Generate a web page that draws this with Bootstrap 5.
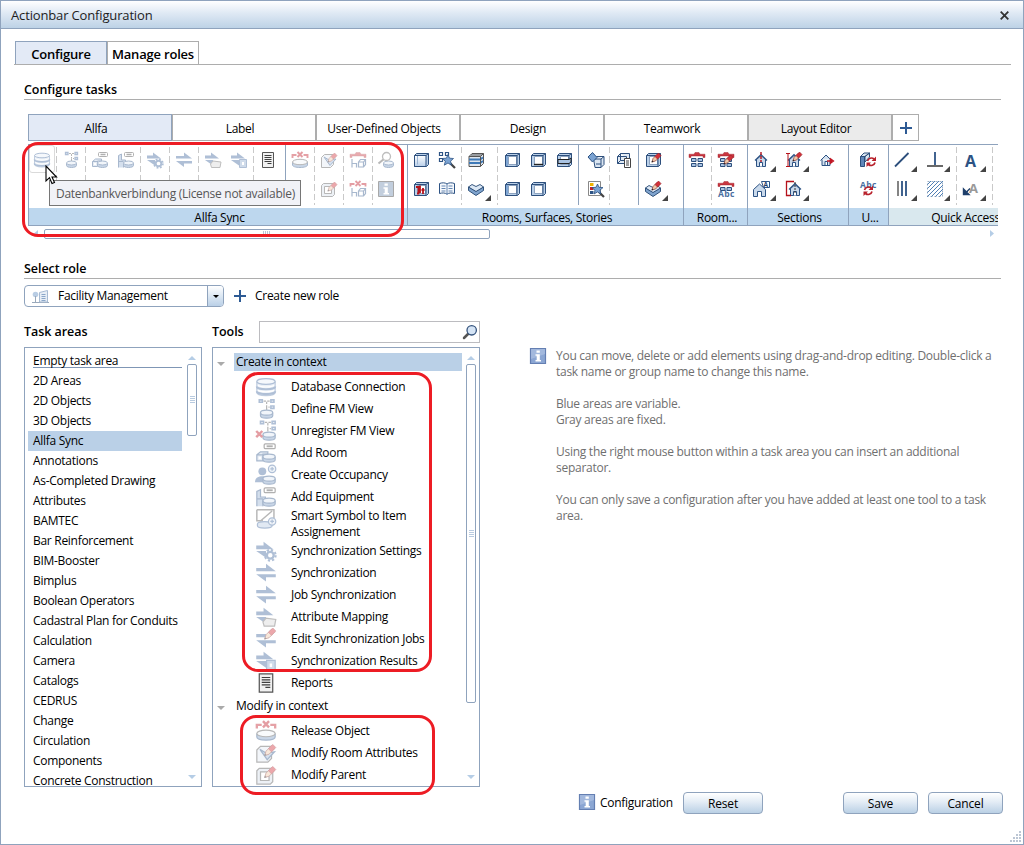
<!DOCTYPE html>
<html lang="en">

<head>
    <meta charset="UTF-8">
    <meta name="viewport" content="width=device-width, initial-scale=1">
    <title>Actionbar Configuration</title>
    <link href="https://cdn.jsdelivr.net/npm/bootstrap@5.3.3/dist/css/bootstrap.min.css" rel="stylesheet">
    <style>
        :root {
            --edge: #8fa3bd;
            --rule: #adadad;
            --pick: #bad0e7;
            --group: #bdd7ee;
        }

        body {
            font-family: "Open Sans", "Noto Sans", sans-serif;
            font-size: 12px;
            line-height: 16px;
            letter-spacing: -0.29px;
            color: #000;
        }

        svg {
            display: block;
            flex: none;
        }

        .dialog-box {
            width: 1024px;
            height: 845px;
            border: 1px solid var(--edge);
            overflow: hidden;
        }

        .title-bar {
            height: 28px;
            padding: 1px 14px 0 10px;
            font-size: 13px;
            letter-spacing: -0.15px;
            color: #1d1d1d;
            background: linear-gradient(#fff, #dfe9f4 45%, #bdd2e6);
            border-bottom: 1px solid var(--edge);
        }

        .top-tabs {
            margin: 12px 12px 0 13px;
            padding-left: 1px;
            height: 24px;
            border-bottom: 1px solid var(--rule);
        }

        .top-tab {
            width: 92px;
            height: 23px;
            line-height: 24px;
            text-align: center;
            font-size: 13px;
            font-weight: 600;
            letter-spacing: -0.2px;
            border: 1px solid var(--rule);
            border-bottom: 0;
            white-space: nowrap;
        }

        .top-tab.on,
        .area-tab.on {
            background: #e3eaf6;
            border-color: var(--edge);
        }

        .section-head {
            margin: 0 22px 0 23px;
            padding-bottom: 1px;
            border-bottom: 1px solid var(--rule);
        }

        .head-text {
            font-size: 12.5px;
            font-weight: 600;
            letter-spacing: -0.05px;
        }

        .head-tasks {
            padding-top: 17px;
        }

        .head-role {
            margin-top: 22px;
        }

        .area-tabs {
            margin: 14px 0 0 27px;
        }

        .area-tab {
            width: 144px;
            height: 27px;
            line-height: 27px;
            padding-right: 8px;
            text-align: center;
            border: 1px solid var(--rule);
        }

        .area-tab.fixed {
            background: #ebebeb;
        }

        .area-tab.plus {
            width: 27px;
            padding: 0;
        }

        /* ribbon */
        .ribbon {
            margin: 3px 25px 0 27px;
            height: 82px;
            border-top: 1px solid var(--edge);
            border-bottom: 1px solid var(--edge);
            overflow: hidden;
        }

        .grp {
            flex: none;
            border-left: 1px solid var(--edge);
        }

        .grp-tools {
            height: 63px;
        }

        .grp-name {
            height: 17px;
            line-height: 19px;
            padding-left: 3px;
            text-align: center;
            background: var(--group);
        }

        .sub {
            padding: 0 1px;
            height: 60px;
            display: grid;
            grid-auto-rows: 29px;
            border-right: 1px solid transparent;
        }

        .sub.dash {
            border-image: repeating-linear-gradient(transparent 0 3px, #c9c9c9 3px 9px) 1;
            border-width: 0 1px 0 0;
            border-style: solid;
        }

        .sub.line {
            border-right-color: var(--edge);
        }

        .c1 { grid-template-columns: 26px; }
        .c2 { grid-template-columns: 26px 26px; }
        .c3 { grid-template-columns: 26px 26px 26px; }
        .t1 { grid-template-columns: 33px; }
        .t2 { grid-template-columns: 33px 33px; }
        .t3 { grid-template-columns: 33px 33px 26px; }

        .tool {
            padding: 6px 4px;
        }

        .tool svg {
            width: 18px;
            height: 18px;
        }

        .off svg {
            opacity: .42;
        }

        .more {
            display: flex;
        }

        .more::after {
            content: "";
            margin-top: 15px;
            border: 3px solid #444;
            border-top-color: transparent;
            border-left-color: transparent;
            width: 0;
            height: 0;
        }

        .hot {
            width: 26px;
            height: 28px;
            padding: 5px 3px;
            border: 1px solid #dadada;
            border-radius: 3px;
        }

        .w-g1 { width: 379px; }
        .w-g2 { width: 276px; }
        .w-g3 { width: 64px; }
        .w-g4 { width: 101px; }
        .w-g5 { width: 40px; }
        .w-g6 { width: 151px; }
        .w-g6 .grp-name { background: #d9e8ee; }

        .h-scroll {
            margin: 2px 29px 0 33px;
            height: 11px;
        }

        .h-thumb {
            width: 446px;
            height: 10px;
            margin-left: 6px;
            border: 1px solid var(--edge);
            border-radius: 2px;
        }

        .grip {
            width: 8px;
            height: 5px;
            background: repeating-linear-gradient(90deg, #b9c6d6 0 1px, transparent 1px 2px);
        }

        .grip-v {
            width: 5px;
            height: 8px;
            background: repeating-linear-gradient(#b9cbe0 0 1px, transparent 1px 2px);
        }

        /* role */
        .role-row {
            margin: 6px 0 0 23px;
        }

        .role-plus {
            margin: 0 9px 0 10px;
        }

        .combo {
            width: 200px;
            height: 22px;
            border: 1px solid var(--edge);
            border-radius: 4px;
            overflow: hidden;
        }

        .combo-icon {
            margin: 0 9px 0 7px;
        }

        .combo-drop {
            width: 16px;
            border-left: 1px solid var(--edge);
            background: linear-gradient(#fff, #bad0e7);
        }

        .pane-heads {
            margin: 14px 0 0 23px;
        }

        .head-left { width: 188px; }
        .head-right { width: 47px; }

        .search-box {
            width: 221px;
            height: 22px;
            border: 1px solid #bcbcc0;
            padding-right: 1px;
        }

        /* lists */
        .panes {
            margin: 4px 0 0 23px;
        }

        .pane {
            height: 440px;
            border: 1px solid var(--edge);
            overflow: hidden;
        }

        .pane-left {
            width: 178px;
            padding-left: 3px;
        }

        .pane-right {
            width: 268px;
            margin-left: 10px;
        }

        .area-list {
            width: 154px;
            padding-top: 4px;
        }

        .area-list li {
            height: 20px;
            line-height: 20px;
            padding-left: 5px;
        }

        .area-list li.first {
            height: 16px;
            line-height: 17px;
            margin: 0 0 3px 5px;
            padding: 0;
            border-bottom: 1px solid #7f96b5;
        }

        .area-list li.sel,
        .branch.sel .branch-name {
            background: var(--pick);
        }

        .v-scroll {
            width: 10px;
        }

        .pane-left .v-scroll { margin-left: 5px; }
        .pane-right .v-scroll { margin-left: 4px; }

        .v-thumb {
            width: 10px;
            border: 1px solid var(--edge);
            border-radius: 2px;
        }

        .h-left { height: 72px; }
        .h-right { height: 339px; }
        .arrow-up { margin: 8px 0 4px; }
        .arrow-down { margin: auto 0 7px; }

        .tree {
            width: 249px;
            padding-top: 5px;
        }

        .branch {
            height: 18px;
            line-height: 18px;
            margin-bottom: 5px;
        }

        .branch.second { margin-top: 3px; }
        .twist { margin: 3px 9px 0 4px; }

        .branch-name {
            width: 228px;
            padding-left: 2px;
        }

        .leaf {
            min-height: 22px;
            padding-left: 42px;
        }

        .leaf svg {
            width: 22px;
            height: 22px;
            margin-right: 14px;
        }

        .hint-icon { margin: 0 9px 0 49px; }

        .hint {
            width: 446px;
            margin-top: 1px;
            color: #6f6f6f;
            letter-spacing: -0.27px;
            white-space: nowrap;
        }

        .foot { margin: 5px 20px 0 577px; }
        .foot svg { margin-bottom: 2px; }

        .foot-name {
            width: 87px;
            padding-left: 4px;
        }

        .push {
            height: 22px;
            padding: 0;
            line-height: 21px;
            font-size: 12px;
            color: #000;
            letter-spacing: -0.15px;
            border: 1px solid var(--edge);
            border-radius: 4px;
            background: linear-gradient(#fff, #e3ecf5 45%, #bad0e5);
        }

        .push-reset { width: 80px; }
        .push-end { width: 75px; }
        .push-end + .push-end { margin-left: 10px; }

        /* overlays */
        .ring {
            position: absolute;
            border: 3px solid #ed1c24;
            border-radius: 16px;
        }

        .ring-a { left: 22px; top: 142px; width: 382px; height: 95px; }
        .ring-b { left: 242px; top: 372px; width: 190px; height: 300px; }
        .ring-c { left: 240px; top: 715px; width: 195px; height: 80px; }

        .tip {
            position: absolute;
            left: 49px;
            top: 180px;
            width: 252px;
            height: 26px;
            line-height: 26px;
            padding-left: 6px;
            white-space: nowrap;
            color: #575757;
            background: #f1f2f7;
            border: 1px solid #767676;
        }

        .pointer {
            position: absolute;
            left: 45px;
            top: 165px;
        }

        .size-grip {
            position: absolute;
            left: 1010px;
            top: 831px;
        }
    </style>
</head>

<body>
    <!-- icon sheet, every symbol on an 18x18 field -->
    <svg width="0" height="0" class="position-absolute">
        <defs>
            <linearGradient id="gBlue" x2="0" y2="1">
                <stop offset="0" stop-color="#fff" />
                <stop offset="1" stop-color="#b9cfe9" />
            </linearGradient>
            <g id="p-disk" stroke="#33598c">
                <path d="M6.500 12v2.500c0 1.200 2.300 2 5 2s5-.8 5-2V12" fill="#7fa0c8" />
                <ellipse cx="11.500" cy="12" rx="5" ry="2" fill="#dfe9f5" />
            </g>
            <g id="p-cube">
                <path d="M2.500 4.500l2-2h12v11l-2 2h-12z" fill="#b9cfe8" stroke="#2d4f7c" />
                <path d="M5.500 5.500h8v8h-8z" fill="#fff" stroke="#8da3bf" />
                <path d="M2.500 4.500h11.500v11M14 4.500l2.500-2" fill="none" stroke="#2d4f7c" />
            </g>
            <g id="p-pencil">
                <path d="M8 11l1-3.500L13.500 3l2.500 2.500L11.500 10z" fill="#f0c9a8" stroke="#8c3a33" stroke-width=".7" />
                <path d="M11 5.500L14.500 2 17 4.500 13.500 8z" fill="#d2303a" stroke="#9c1c25" stroke-width=".6" />
                <path d="M7.500 11.500l.6-2 1.400 1.300z" fill="#222" />
            </g>
            <g id="p-tag" fill="none" stroke="#444">
                <rect x="7.500" y="2.500" width="9" height="4" rx="1" />
                <path d="M9.500 4.500h5" stroke-width="1.500" />
            </g>
            <path id="p-roof" d="M1 3.200h5L7 1.500h4l1 1.700h5V6.500h-2V5H3v1.500H1z" fill="#c93640" stroke="#9a1d27" stroke-width=".4" />
            <g id="p-house">
                <path d="M4.500 8.500L9 4.500l4.500 4v7h-9z" fill="#c9d9eb" stroke="#2d5384" />
                <path d="M3 9.500L9 3.500l6 6" fill="none" stroke="#2d5384" stroke-width="1.200" />
                <path d="M7.500 15.500v-4h3v4" fill="#fff" stroke="#2d5384" />
            </g>
            <g id="p-turn" fill="none" stroke="#b8202b" stroke-width="1.700">
                <path d="M8.500 11a4 4 0 0 1 6.500-2M16 12.500a4 4 0 0 1-6.500 2" />
                <path d="M17 6.500v4.500h-4.500zM7.500 17v-4.500H12z" fill="#b8202b" stroke="none" />
            </g>
            <g id="p-cushion" stroke="#23456f" stroke-width=".9">
                <path d="M1.500 8v3.500l7.500 5 7.500-5V8L9 12z" fill="#7fa3cd" />
                <path d="M1.500 8L5 5.500l4 2 4-2L16.500 8 9 12.500z" fill="#dce8f5" />
            </g>
            <path id="p-flow" d="M1 4.500h6V1.500l8 6H1zM1 9h8v5.500z" fill="#42699f" />
            <path id="p-furniture" d="M3 8v8.500M3 12.500h4.500v4M9.500 11l2-2.500h5v5l-2 2.500h-5zM9.500 11h5v5M14.500 11l2-2.500" fill="none" stroke="#33598c" stroke-width="1.200" />
        </defs>
        <symbol id="i-db" viewBox="0 0 18 18">
            <path d="M1.500 4.500v9c0 1.400 3.300 2.500 7.500 2.500s7.500-1.100 7.500-2.500v-9" fill="#d3dfee" stroke="#6b8ab5" />
            <ellipse cx="9" cy="4.500" rx="7.500" ry="2.300" fill="#e9eff8" stroke="#42699f" />
            <path d="M1.500 8.500c0 1.400 3.300 2.300 7.500 2.300s7.500-.9 7.500-2.300M1.500 12.500c0 1.400 3.300 2.300 7.500 2.300s7.500-.9 7.500-2.300" fill="none" stroke="#42699f" stroke-width="1.700" />
            <path d="M2.500 7.500c1 1 3.500 1.500 6.500 1.500s5.500-.5 6.500-1.500M2.500 11.500c1 1 3.500 1.500 6.500 1.500s5.500-.5 6.500-1.500" fill="none" stroke="#fff" />
        </symbol>
        <symbol id="i-view" viewBox="0 0 18 18">
            <path d="M3.500 1.500h2.500v2H3.500zM13 1.500h2.500v2H13zM13 6.500h2.500v2H13z" fill="#fff" stroke="#42699f" stroke-width="1.300" />
            <path d="M7 2.500h5M9.500 3v4.500H12M9.500 8v2" stroke="#555" fill="none" stroke-dasharray="2 1" />
            <use href="#p-disk" x="-2" />
        </symbol>
        <symbol id="i-unview" viewBox="0 0 18 18">
            <path d="M4.500 1h2.500v2H4.500zM14 1h2.500v2H14zM14 6h2.500v2H14z" fill="#fff" stroke="#42699f" stroke-width="1.300" />
            <path d="M8 2h5M10.500 2.500V7H13M10.500 7.500v2" stroke="#555" fill="none" stroke-dasharray="2 1" />
            <use href="#p-disk" />
            <path d="M1 9l5 5m0-5l-5 5" stroke="#c01825" stroke-width="2" />
        </symbol>
        <symbol id="i-room" viewBox="0 0 18 18">
            <use href="#p-tag" y="-1" />
            <path d="M1.500 15.500v-5l3-2.500h6v2h-4v5.500zM1.500 10.500h5" fill="#c5d4e7" stroke="#33598c" />
            <path d="M3 12h2v2H3z" fill="#fff" />
            <use href="#p-disk" />
        </symbol>
        <symbol id="i-person" viewBox="0 0 18 18">
            <circle cx="6" cy="6" r="3.200" fill="#42699f" />
            <path d="M0 15c0-4 3-5 6-5s5 1 5 5z" fill="#42699f" />
            <circle cx="14" cy="4" r="3" fill="#dce6f2" stroke="#42699f" />
            <path d="M14 2.500v3M12.500 4h3" stroke="#42699f" />
            <use href="#p-disk" />
        </symbol>
        <symbol id="i-equip" viewBox="0 0 18 18">
            <use href="#p-tag" y="-1" />
            <path d="M1.500 16.500V4.500L4.500 3v6h4v2.500h-2v5M1.500 10.500h5" fill="#9bb5d6" stroke="#33598c" />
            <use href="#p-disk" />
        </symbol>
        <symbol id="i-smart" viewBox="0 0 18 18">
            <path d="M1.500 1.500h14v7M1.500 1.500v9h5M4 11L14 2.500" fill="none" stroke="#555" stroke-width="1.200" />
            <path d="M2 13c0-2.500 12-2.500 12 0v1.500c0 2.500-12 2.500-12 0z" fill="#b9cce4" stroke="#42699f" />
            <circle cx="14" cy="11" r="3" fill="#dce6f2" stroke="#42699f" />
            <path d="M14 9.500v3M12.500 11h3" stroke="#42699f" />
        </symbol>
        <symbol id="i-sync" viewBox="0 0 18 18">
            <path d="M1 5h8V1.500l8 6H1zM1 10h16v2.500H9V16z" fill="#42699f" />
        </symbol>
        <symbol id="i-syncset" viewBox="0 0 18 18">
            <use href="#p-flow" />
            <circle cx="12.500" cy="12.500" r="4.400" fill="none" stroke="#42699f" stroke-width="1.700" stroke-dasharray="1.800 1.656" />
            <circle cx="12.500" cy="12.500" r="2.800" fill="#fff" stroke="#42699f" stroke-width="1.900" />
        </symbol>
        <symbol id="i-map" viewBox="0 0 18 18">
            <use href="#p-flow" />
            <path d="M6.500 13l2.500-3 8 1-1 5.500H7.500z" fill="#d7d7d7" stroke="#666" />
        </symbol>
        <symbol id="i-syncedit" viewBox="0 0 18 18">
            <path d="M1 5h8v2.500H1zM1 10h16v2.500H9V16z" fill="#42699f" />
            <use href="#p-pencil" y="-2" />
        </symbol>
        <symbol id="i-result" viewBox="0 0 18 18">
            <use href="#p-flow" />
            <path d="M9.500 8.500h7v8h-7z" fill="#8fabcf" stroke="#42699f" />
            <path d="M12 11h2v3h-2z" fill="#fff" />
        </symbol>
        <symbol id="i-report" viewBox="0 0 18 18">
            <path d="M3.500 1.500h11v15h-11z" fill="#f1f1f1" stroke="#555" />
            <path d="M5.500 4.500h7M5.500 6.500h7M5.500 8.500h7M5.500 10.500h7M8.500 12.500h4" stroke="#3f3f3f" />
        </symbol>
        <symbol id="i-release" viewBox="0 0 18 18">
            <path d="M1.500 7V4h4M16.500 7V4h-4" fill="none" stroke="#c3222d" stroke-width="1.900" />
            <path d="M6.500 1l5 5m0-5l-5 5" stroke="#c01825" stroke-width="2" />
            <path d="M1.500 11v3c0 1.500 3.300 2.500 7.500 2.500s7.500-1 7.500-2.500v-3" fill="#7fa0c8" stroke="#33598c" />
            <ellipse cx="9" cy="11" rx="7.500" ry="2.700" fill="#f0f4fa" stroke="#555" />
        </symbol>
        <symbol id="i-modroom" viewBox="0 0 18 18">
            <path d="M1.500 6.500l3-3h9v10l-3 3h-9z" fill="#e4ebf4" stroke="#555" />
            <path d="M4 6l5 3 7-1-6 6.500z" fill="#9fbadb" stroke="#33598c" />
            <use href="#p-pencil" />
        </symbol>
        <symbol id="i-modparent" viewBox="0 0 18 18">
            <path d="M1.500 5.500l2-2h11v11l-2 2h-11z" fill="#d5dfeb" stroke="#555" />
            <path d="M4.500 6.500h7v7h-7z" fill="#fff" stroke="#555" />
            <use href="#p-pencil" />
        </symbol>
        <symbol id="i-furn" viewBox="0 0 18 18">
            <use href="#p-roof" />
            <use href="#p-furniture" />
        </symbol>
        <symbol id="i-furnx" viewBox="0 0 18 18">
            <path d="M1.500 6.500V4h4M16.500 6.500V4h-4M6.500 1l5 5m0-5l-5 5" fill="none" stroke="#c01825" stroke-width="1.800" />
            <use href="#p-furniture" />
        </symbol>
        <symbol id="i-find" viewBox="0 0 18 18">
            <path d="M7 8L1.500 12.500" stroke="#555" stroke-width="2" />
            <use href="#p-disk" />
            <circle cx="9.500" cy="5.500" r="4" fill="#fff" stroke="#666" stroke-width="1.300" />
        </symbol>
        <symbol id="i-info" viewBox="0 0 18 18">
            <path d="M1.500 1.500h15v15h-15z" fill="#8ba6d3" stroke="#647fb2" stroke-width="1.200" />
            <path d="M2 2h14v5L2 12z" fill="#b2c5e4" opacity=".6" />
            <path d="M7.500 3.500h3.300v2.300H7.500zM6.500 7.300h4.300v5.700H12v1.500H6.500V13h1.200V8.800H6.500z" fill="#fff" />
        </symbol>
        <symbol id="i-infooff" viewBox="0 0 18 18">
            <path d="M1.500 1.500h15v15h-15z" fill="#6f8cb0" stroke="#333" />
            <path d="M7.500 3.500h3.300v2.300H7.500zM6.500 7.300h4.300v5.700H12v1.500H6.500V13h1.200V8.800H6.500z" fill="#fff" />
        </symbol>
        <symbol id="i-cube" viewBox="0 0 18 18">
            <path d="M2.500 4.500l2-2h12v11l-2 2h-12z" fill="#b9cfe8" stroke="#2d4f7c" />
            <path d="M2.500 4.500H14v11H2.500z" fill="url(#gBlue)" stroke="#2d4f7c" />
            <path d="M14 4.500l2.500-2" stroke="#2d4f7c" />
            <path d="M5.500 5v8.500" stroke="#9bb4d3" />
        </symbol>
        <symbol id="i-open" viewBox="0 0 18 18">
            <use href="#p-cube" />
            <path d="M3 5h2v10H3z" fill="#7fa6d4" />
        </symbol>
        <symbol id="i-open2" viewBox="0 0 18 18">
            <use href="#p-cube" />
            <path d="M5 13.500h9" stroke="#222" stroke-width="1.400" />
        </symbol>
        <symbol id="i-wand" viewBox="0 0 18 18">
            <path d="M1.500 1.500h3v3h-3zM7.500 1.500h3v3h-3zM1.500 7.500h3v3h-3z" fill="#fff" stroke="#2d5384" stroke-width="1.200" />
            <path d="M12 12l5 5" stroke="#444" stroke-width="2.200" />
            <path d="M10 3.500l1.500 3.700 4 .3-3 2.700 1 4-3.500-2.200-3.700 2.200 1-4-3.100-2.700 4.200-.3z" fill="#7ba3d2" stroke="#2d5384" stroke-width=".8" />
        </symbol>
        <symbol id="i-stack" viewBox="0 0 18 18">
            <path d="M2 5.500l3-3h11.500v10l-3 3H2z" fill="#dfe6ee" stroke="#555" />
            <path d="M2 8.500h11l3-2M2 12h11l3-2" fill="none" stroke="#3f7ab8" stroke-width="2" />
            <path d="M2 5.500h11.500v10M13.500 5.500l3-3M4 4h11" fill="none" stroke="#555" />
        </symbol>
        <symbol id="i-redcube" viewBox="0 0 18 18">
            <use href="#p-cube" />
            <path d="M4 7h2.500v6.500H5M8 5.500V13M11 8v6M9.500 10h3" stroke="#b5121b" stroke-width="1.800" fill="none" />
        </symbol>
        <symbol id="i-book" viewBox="0 0 18 18">
            <path d="M1.500 3.500c3-1 5.500-1 7.500.5 2-1.500 4.500-1.500 7.500-.5v10c-3-.8-5.500-.8-7.500.7-2-1.500-4.500-1.500-7.500-.7z" fill="#f6f9fd" stroke="#2d5384" />
            <path d="M9 4v10.500M3.500 6h4M3.500 8.500h4M3.500 11h4M10.500 6h4M10.500 8.500h4M10.500 11h4" stroke="#6486b2" />
        </symbol>
        <symbol id="i-cushion" viewBox="0 0 18 18">
            <use href="#p-cushion" y="-1" />
        </symbol>
        <symbol id="i-penroom" viewBox="0 0 18 18">
            <use href="#p-cushion" />
            <use href="#p-pencil" y="-1" />
        </symbol>
        <symbol id="i-slab" viewBox="0 0 18 18">
            <use href="#p-cube" />
            <path d="M3 8.500h11l2-1.500v4l-2 1.500H3z" fill="#a9c3e2" stroke="#222" />
        </symbol>
        <symbol id="i-diamond" viewBox="0 0 18 18">
            <path d="M6.500 7.500l3-2h7.500v8l-3 3H8zM14 8v8.500M8 8h6l3-2.500M9 13h5" fill="#dbe6f2" stroke="#2d4f7c" />
            <path d="M1 6l4.500-4.500L10 6.500 5.500 11z" fill="#7ba3d2" stroke="#2d5384" />
        </symbol>
        <symbol id="i-legend" viewBox="0 0 18 18">
            <path d="M1.500 1.500h12v14h-12z" fill="#fff" stroke="#888" />
            <path d="M3 3h3.500v3H3z" fill="#f0b400" />
            <path d="M3 7h3.500v3H3z" fill="#c3222d" />
            <path d="M3 11h3.500v3H3z" fill="#2d5384" />
            <path d="M12 12l5 5" stroke="#444" stroke-width="2.200" />
            <path d="M10.500 4l1.500 3.300 4 .3-3 2.500.8 3.800-3.300-2-3.300 2 .8-3.800L5 7.600l4-.3z" fill="#7ba3d2" stroke="#2d5384" stroke-width=".8" />
        </symbol>
        <symbol id="i-cubedoc" viewBox="0 0 18 18">
            <path d="M2.500 5.500l3-3h9v8l-3 2h-9zM5.500 2.500v7h9M5.500 9.500l-3 3M2.500 5.500h9v7" fill="#e1eaf4" stroke="#2d4f7c" />
            <path d="M9.500 7.500h6v9h-6z" fill="#fff" stroke="#444" />
            <path d="M11 10h3M11 12h3M11 14h3" stroke="#444" />
        </symbol>
        <symbol id="i-cubepen" viewBox="0 0 18 18">
            <use href="#p-cube" />
            <use href="#p-pencil" />
        </symbol>
        <symbol id="i-floor" viewBox="0 0 18 18">
            <use href="#p-roof" />
            <path d="M3.500 7.500h4.500v3H3.500zM10 7.500h4.500v3H10zM3.500 12.500h4.500v3H3.500zM10 12.500h4.500v3H10z" fill="#a9c3e2" stroke="#2d4f7c" />
        </symbol>
        <symbol id="i-floorpen" viewBox="0 0 18 18">
            <use href="#i-floor" width="18" height="18" />
            <use href="#p-pencil" y="2" x="-1" />
        </symbol>
        <symbol id="i-house" viewBox="0 0 18 18">
            <use href="#p-house" />
            <path d="M9 1v10" stroke="#b5121b" stroke-width="1.400" stroke-dasharray="3 1" />
        </symbol>
        <symbol id="i-housepen" viewBox="0 0 18 18">
            <use href="#p-house" />
            <path d="M3 2v14M1 2.500h4M1 15.500h4" stroke="#b5121b" fill="none" />
            <use href="#p-pencil" y="-1" />
        </symbol>
        <symbol id="i-housego" viewBox="0 0 18 18">
            <path d="M2.500 9.500L8 4l5.500 5.500M4 8.500v6h8v-6M7 14.500v-4h2.500v4" fill="#d3e0ee" stroke="#2d5384" />
            <path d="M9 10h4M12.500 7.800l3 2.200-3 2.200z" fill="#c01825" stroke="#c01825" stroke-width="1.300" />
        </symbol>
        <symbol id="i-housecut" viewBox="0 0 18 18">
            <use href="#p-house" x="1" />
            <path d="M9 1.500H1.500v14H6" fill="none" stroke="#b5121b" stroke-width="1.300" />
            <path d="M10 2v12" stroke="#333" stroke-dasharray="2 1" />
        </symbol>
        <symbol id="i-wallturn" viewBox="0 0 18 18">
            <path d="M1.500 5.500h4v10h-4z" fill="#5f86b8" stroke="#2d4f7c" />
            <path d="M1.500 5.500L5 2h5.500L6 5.500zM6 5.500L10.500 2v4L6 11z" fill="#dbe6f2" stroke="#2d4f7c" />
            <use href="#p-turn" y="-1" />
        </symbol>
        <symbol id="i-line" viewBox="0 0 18 18">
            <path d="M2 15.500L15.500 2" stroke="#2d4f7c" stroke-width="1.800" />
        </symbol>
        <symbol id="i-perp" viewBox="0 0 18 18">
            <path d="M9 1v13" stroke="#2d5384" stroke-width="1.800" />
            <path d="M1 15h16" stroke="#444" stroke-width="1.600" />
        </symbol>
        <symbol id="i-bars" viewBox="0 0 18 18">
            <path d="M5 1v15" stroke="#777" stroke-width="1.800" />
            <path d="M9 1v15M13 1v15" stroke="#2d5384" stroke-width="1.800" />
        </symbol>
        <symbol id="i-hatch" viewBox="0 0 18 18">
            <path d="M1 5l4-4M1 9l8-8M1 13L13 1M1 17L17 1M5 17L17 5M9 17l8-8M13 17l4-4" stroke="#4f7fb5" />
            <path d="M1.500 1.500h15v15h-15z" fill="none" stroke="#7f99b8" stroke-dasharray="2 2" stroke-width=".8" />
        </symbol>
        <symbol id="i-plus" viewBox="0 0 12 12">
            <path d="M6 0v12M0 6h12" stroke="#2d5a94" stroke-width="2" />
        </symbol>
        <symbol id="i-up" viewBox="0 0 8 4">
            <path d="M0 4l4-4 4 4z" fill="#b5cde6" />
        </symbol>
        <symbol id="i-down" viewBox="0 0 8 4">
            <path d="M0 0h8L4 4z" fill="#b5cde6" />
        </symbol>
    </svg>

    <div class="dialog-box bg-white">
        <div class="title-bar d-flex justify-content-between align-items-center">
            <span>Actionbar Configuration</span>
            <svg width="9" height="9" viewBox="0 0 9 9">
                <path d="M.7 .7l7.600 7.600m0-7.600L.7 8.300" stroke="#333" stroke-width="1.800" />
            </svg>
        </div>

        <div class="top-tabs d-flex">
            <div class="top-tab on">Configure</div>
            <div class="top-tab">Manage roles</div>
        </div>

        <div class="section-head head-text head-tasks">Configure tasks</div>

        <div class="area-tabs d-flex">
            <div class="area-tab on">Allfa</div>
            <div class="area-tab">Label</div>
            <div class="area-tab">User-Defined Objects</div>
            <div class="area-tab">Design</div>
            <div class="area-tab">Teamwork</div>
            <div class="area-tab fixed">Layout Editor</div>
            <div class="area-tab plus d-flex align-items-center justify-content-center">
                <svg width="12" height="12"><use href="#i-plus" /></svg>
            </div>
        </div>

        <div class="ribbon d-flex">
            <div class="grp w-g1">
                <div class="grp-tools d-flex">
                    <div class="sub dash c1 off ps-0"><div class="tool hot"><svg><use href="#i-db" /></svg></div></div>
                    <div class="sub dash c1 off"><div class="tool"><svg><use href="#i-view" /></svg></div></div>
                    <div class="sub dash c2 off">
                        <div class="tool"><svg><use href="#i-room" /></svg></div>
                        <div class="tool"><svg><use href="#i-equip" /></svg></div>
                    </div>
                    <div class="sub dash c1 off"><div class="tool"><svg><use href="#i-syncset" /></svg></div></div>
                    <div class="sub dash c1 off"><div class="tool"><svg><use href="#i-sync" /></svg></div></div>
                    <div class="sub dash c2 off">
                        <div class="tool"><svg><use href="#i-map" /></svg></div>
                        <div class="tool"><svg><use href="#i-result" /></svg></div>
                    </div>
                    <div class="sub line c1 pe-1"><div class="tool"><svg><use href="#i-report" /></svg></div></div>
                    <div class="sub dash c1 off"><div class="tool"><svg><use href="#i-release" /></svg></div></div>
                    <div class="sub dash c1 off">
                        <div class="tool"><svg><use href="#i-modroom" /></svg></div>
                        <div class="tool"><svg><use href="#i-modparent" /></svg></div>
                    </div>
                    <div class="sub dash c1 off">
                        <div class="tool"><svg><use href="#i-furn" /></svg></div>
                        <div class="tool"><svg><use href="#i-furnx" /></svg></div>
                    </div>
                    <div class="sub c1 off ps-0">
                        <div class="tool"><svg><use href="#i-find" /></svg></div>
                        <div class="tool"><svg><use href="#i-infooff" /></svg></div>
                    </div>
                </div>
                <div class="grp-name">Allfa Sync</div>
            </div>
            <div class="grp w-g2">
                <div class="grp-tools d-flex">
                    <div class="sub dash c2 ps-0">
                        <div class="tool"><svg><use href="#i-cube" /></svg></div>
                        <div class="tool"><svg><use href="#i-wand" /></svg></div>
                        <div class="tool"><svg><use href="#i-redcube" /></svg></div>
                        <div class="tool"><svg><use href="#i-book" /></svg></div>
                    </div>
                    <div class="sub dash t1">
                        <div class="tool"><svg><use href="#i-stack" /></svg></div>
                        <div class="tool more"><svg><use href="#i-cushion" /></svg></div>
                    </div>
                    <div class="sub line c3">
                        <div class="tool"><svg><use href="#i-open" /></svg></div>
                        <div class="tool"><svg><use href="#i-open2" /></svg></div>
                        <div class="tool"><svg><use href="#i-slab" /></svg></div>
                        <div class="tool"><svg><use href="#i-open" /></svg></div>
                        <div class="tool"><svg><use href="#p-cube" /></svg></div>
                    </div>
                    <div class="sub dash c1 px-0 ps-1">
                        <div class="tool"><svg><use href="#i-diamond" /></svg></div>
                        <div class="tool"><svg><use href="#i-legend" /></svg></div>
                    </div>
                    <div class="sub line c1"><div class="tool"><svg><use href="#i-cubedoc" /></svg></div></div>
                    <div class="sub t1">
                        <div class="tool"><svg><use href="#i-cubepen" /></svg></div>
                        <div class="tool more"><svg><use href="#i-penroom" /></svg></div>
                    </div>
                </div>
                <div class="grp-name">Rooms, Surfaces, Stories</div>
            </div>
            <div class="grp w-g3">
                <div class="grp-tools d-flex">
                    <div class="sub dash c1 ps-0"><div class="tool"><svg><use href="#i-floor" /></svg></div></div>
                    <div class="sub c1">
                        <div class="tool"><svg><use href="#i-floorpen" /></svg></div>
                        <div class="tool">
                            <svg viewBox="0 0 18 18">
                                <use href="#p-roof" />
                                <path d="M3.500 7.500h4.500v3H3.500zM10 7.500h4.500v3H10z" fill="#a9c3e2" stroke="#2d4f7c" />
                                <text x="1" y="17" font-size="8.500" font-weight="700" fill="#4a6f9f" textLength="16">Abc</text>
                            </svg>
                        </div>
                    </div>
                </div>
                <div class="grp-name">Room...</div>
            </div>
            <div class="grp w-g4">
                <div class="grp-tools d-flex">
                    <div class="sub t3 ps-0">
                        <div class="tool more"><svg><use href="#i-house" /></svg></div>
                        <div class="tool more"><svg><use href="#i-housepen" /></svg></div>
                        <div class="tool"><svg><use href="#i-housego" /></svg></div>
                        <div class="tool more">
                            <svg viewBox="0 0 18 18">
                                <path d="M1.500 16.500V9.500L7.500 4l6 5.500v7h-4v-5h-4v5z" fill="#c9d9eb" stroke="#2d5384" />
                                <path d="M9.500 1.500h8v6h-6z" fill="#fff" stroke="#2d5384" />
                                <text x="11.500" y="7" font-size="6.500" font-weight="700" fill="#1f3f6b">A</text>
                            </svg>
                        </div>
                        <div class="tool more"><svg><use href="#i-housecut" /></svg></div>
                    </div>
                </div>
                <div class="grp-name">Sections</div>
            </div>
            <div class="grp w-g5">
                <div class="grp-tools d-flex justify-content-center">
                    <div class="sub c1 px-0">
                        <div class="tool"><svg><use href="#i-wallturn" /></svg></div>
                        <div class="tool">
                            <svg viewBox="0 0 18 18">
                                <text x="1" y="7.500" font-size="8.500" font-weight="700" fill="#4a6f9f" textLength="16">Abc</text>
                                <use href="#p-turn" x="-3" y="-1" />
                            </svg>
                        </div>
                    </div>
                </div>
                <div class="grp-name">U...</div>
            </div>
            <div class="grp w-g6">
                <div class="grp-tools d-flex">
                    <div class="sub dash t2 ps-0">
                        <div class="tool more"><svg><use href="#i-line" /></svg></div>
                        <div class="tool more"><svg><use href="#i-perp" /></svg></div>
                        <div class="tool more"><svg><use href="#i-bars" /></svg></div>
                        <div class="tool more"><svg><use href="#i-hatch" /></svg></div>
                    </div>
                    <div class="sub dash t1">
                        <div class="tool more">
                            <svg viewBox="0 0 18 18"><text x="3" y="15.500" font-size="16" font-weight="700" fill="#2d5384">A</text></svg>
                        </div>
                        <div class="tool more">
                            <svg viewBox="0 0 18 18">
                                <text x="7" y="12.500" font-size="13" font-weight="700" fill="#999">A</text>
                                <path d="M8 8.500l-4 4M1.500 9v5.500H7z" stroke="#1f3f6b" fill="#1f3f6b" stroke-width="1.400" />
                            </svg>
                        </div>
                    </div>
                </div>
                <div class="grp-name">Quick Access</div>
            </div>
        </div>

        <div class="h-scroll d-flex align-items-center">
            <svg width="4" height="7" viewBox="0 0 4 7"><path d="M4 0v7L0 3.500z" fill="#b5cde6" /></svg>
            <div class="h-thumb d-flex align-items-center justify-content-center"><div class="grip"></div></div>
            <svg class="ms-auto" width="4" height="7" viewBox="0 0 4 7"><path d="M0 0v7l4-3.500z" fill="#b5cde6" /></svg>
        </div>

        <div class="section-head head-text head-role">Select role</div>

        <div class="role-row d-flex align-items-center">
            <div class="combo d-flex">
                <div class="d-flex flex-grow-1 align-items-center">
                    <svg class="combo-icon" width="17" height="14" viewBox="0 0 17 14">
                        <circle cx="3.500" cy="5.500" r="2.800" fill="#b9cde4" />
                        <path d="M3.500 7v6M0 13.500h17" stroke="#9aa9bb" />
                        <path d="M7.500 13V3.500L15.500 1.500V13z" fill="#e7eef6" stroke="#a7bbd3" />
                        <path d="M9.500 5.500h4M9.500 7.500h4M9.500 9.500h4M9.500 11.500h4" stroke="#8ba7c9" />
                    </svg>
                    <span>Facility Management</span>
                </div>
                <div class="combo-drop d-flex align-items-center justify-content-center">
                    <svg width="6" height="3" viewBox="0 0 6 3"><path d="M0 0h6L3 3z" /></svg>
                </div>
            </div>
            <svg class="role-plus" width="12" height="12"><use href="#i-plus" /></svg>
            <span>Create new role</span>
        </div>

        <div class="pane-heads d-flex align-items-center">
            <div class="head-text head-left">Task areas</div>
            <div class="head-text head-right">Tools</div>
            <div class="search-box d-flex align-items-center justify-content-end">
                <svg width="16" height="16" viewBox="0 0 16 16">
                    <path d="M6 10L2 14" stroke="#555" stroke-width="2.500" stroke-linecap="round" />
                    <circle cx="9.700" cy="6.300" r="4.700" fill="#d5e4f5" stroke="#35537d" stroke-width="1.300" />
                </svg>
            </div>
        </div>

        <div class="panes d-flex">
            <div class="pane pane-left d-flex">
                <ul class="area-list list-unstyled mb-0 text-nowrap">
                    <li class="first">Empty task area</li>
                    <li>2D Areas</li>
                    <li>2D Objects</li>
                    <li>3D Objects</li>
                    <li class="sel">Allfa Sync</li>
                    <li>Annotations</li>
                    <li>As-Completed Drawing</li>
                    <li>Attributes</li>
                    <li>BAMTEC</li>
                    <li>Bar Reinforcement</li>
                    <li>BIM-Booster</li>
                    <li>Bimplus</li>
                    <li>Boolean Operators</li>
                    <li>Cadastral Plan for Conduits</li>
                    <li>Calculation</li>
                    <li>Camera</li>
                    <li>Catalogs</li>
                    <li>CEDRUS</li>
                    <li>Change</li>
                    <li>Circulation</li>
                    <li>Components</li>
                    <li>Concrete Construction</li>
                </ul>
                <div class="v-scroll d-flex flex-column align-items-center">
                    <svg class="arrow-up" width="8" height="4"><use href="#i-up" /></svg>
                    <div class="v-thumb h-left d-flex align-items-center justify-content-center"><div class="grip-v"></div></div>
                    <svg class="arrow-down" width="8" height="4"><use href="#i-down" /></svg>
                </div>
            </div>

            <div class="pane pane-right d-flex">
                <div class="tree text-nowrap">
                    <div class="branch sel d-flex align-items-center">
                        <svg class="twist" width="8" height="4" viewBox="0 0 8 4"><path d="M0 0h8L4 4z" fill="#aaa" /></svg>
                        <span class="branch-name">Create in context</span>
                    </div>
                    <div class="leaf off d-flex align-items-center"><svg><use href="#i-db" /></svg>Database Connection</div>
                    <div class="leaf off d-flex align-items-center"><svg><use href="#i-view" /></svg>Define FM View</div>
                    <div class="leaf off d-flex align-items-center"><svg><use href="#i-unview" /></svg>Unregister FM View</div>
                    <div class="leaf off d-flex align-items-center"><svg><use href="#i-room" /></svg>Add Room</div>
                    <div class="leaf off d-flex align-items-center"><svg><use href="#i-person" /></svg>Create Occupancy</div>
                    <div class="leaf off d-flex align-items-center"><svg><use href="#i-equip" /></svg>Add Equipment</div>
                    <div class="leaf off d-flex"><svg><use href="#i-smart" /></svg><span>Smart Symbol to Item<br>Assignement</span></div>
                    <div class="leaf off d-flex align-items-center"><svg><use href="#i-syncset" /></svg>Synchronization Settings</div>
                    <div class="leaf off d-flex align-items-center"><svg><use href="#i-sync" /></svg>Synchronization</div>
                    <div class="leaf off d-flex align-items-center"><svg><use href="#i-sync" /></svg>Job Synchronization</div>
                    <div class="leaf off d-flex align-items-center"><svg><use href="#i-map" /></svg>Attribute Mapping</div>
                    <div class="leaf off d-flex align-items-center"><svg><use href="#i-syncedit" /></svg>Edit Synchronization Jobs</div>
                    <div class="leaf off d-flex align-items-center"><svg><use href="#i-result" /></svg>Synchronization Results</div>
                    <div class="leaf d-flex align-items-center"><svg><use href="#i-report" /></svg>Reports</div>
                    <div class="branch second d-flex align-items-center">
                        <svg class="twist" width="8" height="4" viewBox="0 0 8 4"><path d="M0 0h8L4 4z" fill="#aaa" /></svg>
                        <span class="branch-name">Modify in context</span>
                    </div>
                    <div class="leaf off d-flex align-items-center"><svg><use href="#i-release" /></svg>Release Object</div>
                    <div class="leaf off d-flex align-items-center"><svg><use href="#i-modroom" /></svg>Modify Room Attributes</div>
                    <div class="leaf off d-flex align-items-center"><svg><use href="#i-modparent" /></svg>Modify Parent</div>
                </div>
                <div class="v-scroll d-flex flex-column align-items-center">
                    <svg class="arrow-up" width="8" height="4"><use href="#i-up" /></svg>
                    <div class="v-thumb h-right d-flex align-items-center justify-content-center"><div class="grip-v"></div></div>
                    <svg class="arrow-down" width="8" height="4"><use href="#i-down" /></svg>
                </div>
            </div>

            <svg class="hint-icon" width="18" height="18"><use href="#i-info" /></svg>
            <div class="hint">
                <p class="mb-3">You can move, delete or add elements using drag-and-drop editing. Double-click a<br>task name or group name to change this name.</p>
                <p class="mb-3">Blue areas are variable.<br>Gray areas are fixed.</p>
                <p class="mb-3">Using the right mouse button within a task area you can insert an additional<br>separator.</p>
                <p class="mb-0">You can only save a configuration after you have added at least one tool to a task<br>area.</p>
            </div>
        </div>

        <div class="foot d-flex align-items-center">
            <svg width="18" height="18"><use href="#i-info" /></svg>
            <span class="foot-name">Configuration</span>
            <button type="button" class="btn push push-reset">Reset</button>
            <button type="button" class="btn push push-end ms-auto">Save</button>
            <button type="button" class="btn push push-end">Cancel</button>
        </div>
    </div>

    <div class="tip">Datenbankverbindung (License not available)</div>
    <svg class="pointer" width="14" height="20" viewBox="0 0 14 20">
        <path d="M1 1v15l3.500-3.300L7 18.500l2.500-1L7 12h4.500z" fill="#fff" stroke="#000" stroke-width="1.100" />
    </svg>
    <div class="ring ring-a"></div>
    <div class="ring ring-b"></div>
    <div class="ring ring-c"></div>
    <svg class="size-grip" width="12" height="12" viewBox="0 0 12 12">
        <path d="M9 1h2M6 4h2M9 4h2M3 7h2M6 7h2M9 7h2M0 10h2M3 10h2M6 10h2M9 10h2" stroke="#bcc6d4" stroke-width="2" />
    </svg>

    <script src="https://cdn.jsdelivr.net/npm/bootstrap@5.3.3/dist/js/bootstrap.bundle.min.js"></script>
</body>

</html>
